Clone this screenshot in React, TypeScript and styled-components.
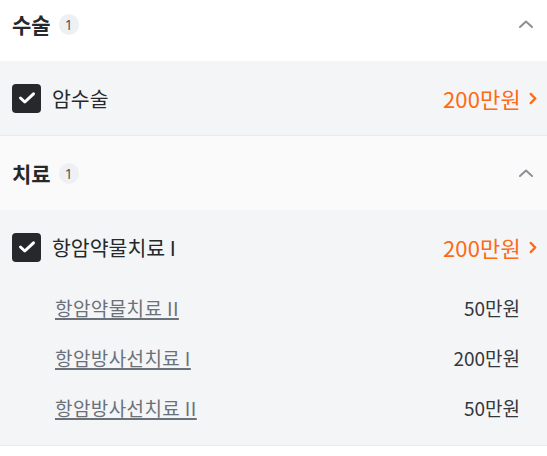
import styled, { createGlobalStyle } from "styled-components";

const GlobalStyle = createGlobalStyle`
  html, body {
    margin: 0;
    padding: 0;
    background: #ffffff;
    font-family: "Noto Sans CJK KR", "Noto Sans", sans-serif;
    color: #26282b;
  }
`;

const Page = styled.div`
  width: 547px;
  margin-top: -13px;
`;

const Section = styled.section``;

const Header = styled.div<{ $bg: string }>`
  display: flex;
  align-items: center;
  justify-content: space-between;
  height: 74px;
  padding: 0 13px 0 12px;
  box-sizing: border-box;
  background: ${(p) => p.$bg};
`;

const HeaderLeft = styled.div`
  display: flex;
  align-items: center;
  gap: 8px;
`;

const Title = styled.span`
  font-size: 21px;
  font-weight: 700;
  color: #26282b;
`;

const Badge = styled.span`
  display: inline-flex;
  align-items: center;
  justify-content: center;
  width: 20px;
  height: 21px;
  border-radius: 10px;
  background: #eef0f3;
  color: #45494e;
  font-family: "Open Sans", "Noto Sans", sans-serif;
  font-size: 14px;
`;

const Body = styled.div`
  background: #f4f5f7;
  border-bottom: 1px solid #e9ebee;
`;

const MainRow = styled.div`
  display: flex;
  align-items: center;
  justify-content: space-between;
  height: 74px;
  padding: 0 10px 0 12px;
  box-sizing: border-box;
`;

const Label = styled.label`
  display: flex;
  align-items: center;
  gap: 11px;
  font-size: 20.5px;
  color: #26282b;
`;

const Check = styled.span`
  display: inline-flex;
  align-items: center;
  justify-content: center;
  width: 29px;
  height: 29px;
  border-radius: 4px;
  background: #26282c;
`;

const Price = styled.span`
  display: flex;
  align-items: center;
  gap: 8px;
  font-size: 22px;
  letter-spacing: 0.2px;
  color: #ff6a13;
`;

const SubList = styled.div`
  padding: 0 27px 13px 55px;
  margin-top: -2px;
`;

const SubRow = styled.div`
  display: flex;
  align-items: center;
  justify-content: space-between;
  height: 50px;
`;

const SubName = styled.a`
  font-size: 19px;
  letter-spacing: 0.4px;
  color: #6b7178;
  text-decoration: underline;
  text-decoration-color: #6b7178;
  text-decoration-thickness: 2px;
  text-underline-offset: 2px;
`;

const SubPrice = styled.span`
  font-size: 19px;
  color: #34373b;
`;

const CheckIcon = () => (
  <svg width="18" height="14" viewBox="0 0 18 14">
    <path d="M2.5 7 L6.8 11 L15.5 2.8" fill="none" stroke="#fff" strokeWidth="3" strokeLinecap="round" strokeLinejoin="round" />
  </svg>
);

const ChevronUp = () => (
  <svg width="16" height="10" viewBox="0 0 16 10">
    <path d="M2 8 L8 2.5 L14 8" fill="none" stroke="#8a9097" strokeWidth="2" strokeLinecap="round" strokeLinejoin="round" />
  </svg>
);

const ChevronRight = () => (
  <svg width="8" height="13" viewBox="0 0 8 13">
    <path d="M1.8 2 L6.2 6.5 L1.8 11" fill="none" stroke="#ff6a13" strokeWidth="2.5" strokeLinecap="round" strokeLinejoin="round" />
  </svg>
);

type Sub = { name: string; price: string };
type Group = { title: string; count: number; bg: string; item: string; price: string; subs: Sub[] };

const groups: Group[] = [
  { title: "수술", count: 1, bg: "#ffffff", item: "암수술", price: "200만원", subs: [] },
  {
    title: "치료",
    count: 1,
    bg: "#fafafa",
    item: "항암약물치료 I",
    price: "200만원",
    subs: [
      { name: "항암약물치료 II", price: "50만원" },
      { name: "항암방사선치료 I", price: "200만원" },
      { name: "항암방사선치료 II", price: "50만원" },
    ],
  },
];

export default function App() {
  return (
    <>
      <GlobalStyle />
      <Page>
        {groups.map((g) => (
          <Section key={g.title}>
            <Header $bg={g.bg}>
              <HeaderLeft>
                <Title>{g.title}</Title>
                <Badge>{g.count}</Badge>
              </HeaderLeft>
              <ChevronUp />
            </Header>
            <Body>
              <MainRow>
                <Label>
                  <Check>
                    <CheckIcon />
                  </Check>
                  {g.item}
                </Label>
                <Price>
                  {g.price}
                  <ChevronRight />
                </Price>
              </MainRow>
              {g.subs.length > 0 && (
                <SubList>
                  {g.subs.map((s) => (
                    <SubRow key={s.name}>
                      <SubName>{s.name}</SubName>
                      <SubPrice>{s.price}</SubPrice>
                    </SubRow>
                  ))}
                </SubList>
              )}
            </Body>
          </Section>
        ))}
      </Page>
    </>
  );
}
